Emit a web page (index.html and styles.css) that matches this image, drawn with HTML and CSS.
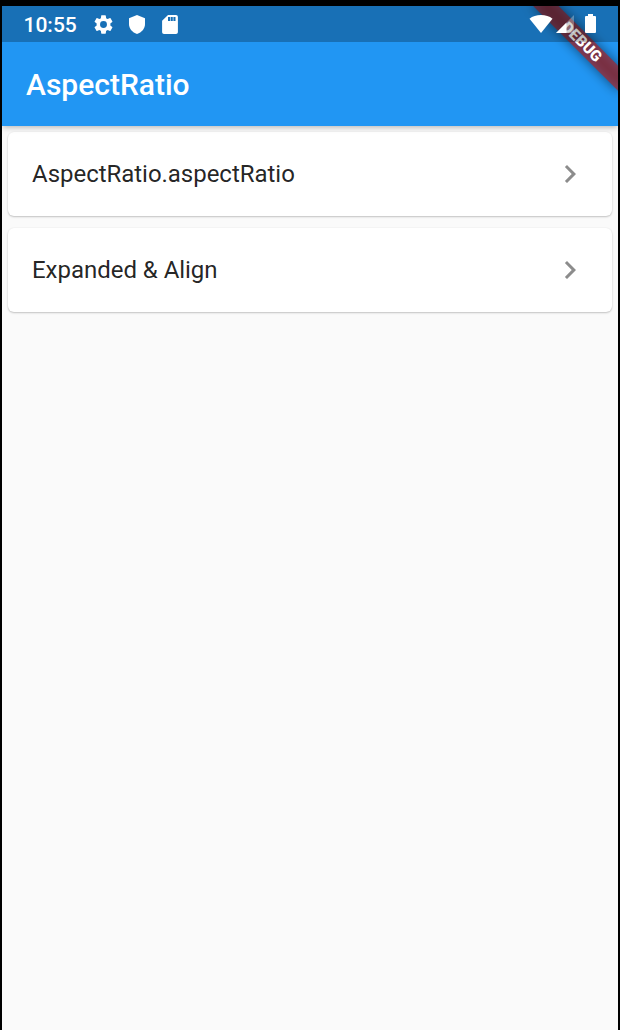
FILE: index.html
```html
<!DOCTYPE html>
<html lang="en">
<head>
<meta charset="utf-8">
<title>AspectRatio</title>
<link rel="stylesheet" href="styles.css">
</head>
<body>
<div class="screen">
  <div class="status-bar">
    <span class="clock">10:55</span>
    <div class="notifications">
      <svg class="gear" viewBox="0 0 24 24"><path d="M19.14 12.94c.04-.3.06-.61.06-.94 0-.32-.02-.64-.07-.94l2.03-1.58a.49.49 0 0 0 .12-.61l-1.92-3.32a.49.49 0 0 0-.59-.22l-2.39.96c-.5-.38-1.03-.7-1.62-.94l-.36-2.54a.48.48 0 0 0-.48-.41h-3.84c-.24 0-.43.17-.47.41l-.36 2.54c-.59.24-1.13.57-1.62.94l-2.39-.96a.48.48 0 0 0-.59.22L2.74 8.87c-.12.21-.08.47.12.61l2.03 1.58c-.05.3-.09.63-.09.94s.02.64.07.94l-2.03 1.58a.49.49 0 0 0-.12.61l1.92 3.32c.12.22.37.29.59.22l2.39-.96c.5.38 1.03.7 1.62.94l.36 2.54c.05.24.24.41.48.41h3.84c.24 0 .44-.17.47-.41l.36-2.54c.59-.24 1.13-.56 1.62-.94l2.39.96c.22.08.47 0 .59-.22l1.92-3.32a.48.48 0 0 0-.12-.61l-2.01-1.58zM12 15.6A3.6 3.6 0 1 1 12 8.400a3.6 3.6 0 0 1 0 7.200z"/></svg>
      <svg class="shield" viewBox="0 0 16 19"><path d="M8 0L0 3.200V9c0 4.500 3.300 8.500 8 10 4.700-1.500 8-5.500 8-10V3.200z"/></svg>
      <svg class="sd-card" viewBox="0 0 16 19"><path fill-rule="evenodd" d="M14 0H6L.1 5.700V17c0 1.100.8 2 1.900 2h12c1.100 0 1.900-.9 1.900-2V2c0-1.100-.8-2-1.900-2zM6 2h2.100v4H6zM8.700 2h2.100v4H8.700zM11.400 2h2.100v4h-2.100z"/></svg>
    </div>
    <div class="system-icons">
      <svg class="wifi" viewBox="0 0 24 18"><path d="M12 18L.5 3.700C3.500 1.300 7.500 0 12 0s8.500 1.300 11.500 3.700z"/></svg>
      <svg class="signal" viewBox="0 0 18 18"><path class="signal-off" d="M0 18L18 0v18z"/><path d="M0 18L10.500 7.500V18z"/></svg>
      <svg class="battery" viewBox="0 0 11 19"><path d="M3 0h5v2h2q1 0 1 1v15q0 1-1 1H1q-1 0-1-1V3q0-1 1-1h2z"/></svg>
    </div>
  </div>
  <header class="app-bar"><h1 class="title">AspectRatio</h1></header>
  <main class="list">
    <a class="card">
      <span class="label">AspectRatio.aspectRatio</span>
      <svg class="chevron" viewBox="0 0 24 24"><path d="M10 6L8.590 7.410 13.170 12l-4.580 4.590L10 18l6-6z"/></svg>
    </a>
    <a class="card">
      <span class="label">Expanded &amp; Align</span>
      <svg class="chevron" viewBox="0 0 24 24"><path d="M10 6L8.590 7.410 13.170 12l-4.580 4.590L10 18l6-6z"/></svg>
    </a>
  </main>
  <div class="debug-corner"><div class="debug-banner"><span class="debug-text">DEBUG</span></div></div>
</div>
</body>
</html>
```
FILE: styles.css
```css
* { box-sizing: border-box; }
body {
  margin: 0;
  height: 1030px;
  padding: 6px 2px 0;
  background: #000;
  font-family: Roboto, sans-serif;
  overflow: hidden;
}
.screen {
  position: relative;
  height: 1024px;
  background: #fafafa;
  overflow: hidden;
}
svg { display: block; flex: none; fill: #fff; }

/* The status bar is a translucent scrim above the app, including the banner. */
.status-bar {
  position: relative;
  z-index: 3;
  height: 36px;
  padding: 0 22.5px 0 21.5px;
  display: flex;
  align-items: center;
  justify-content: space-between;
  background: rgba(0, 0, 0, .25);
}
.clock {
  width: 68.5px;
  padding-top: 1px;
  color: #fff;
  font-size: 21px;
  font-weight: 500;
  line-height: 24px;
}
.notifications { display: flex; align-items: center; margin-right: auto; }
.gear { width: 23px; height: 23px; }
.shield { width: 16px; height: 19px; margin-left: 13.5px; }
.sd-card { width: 16px; height: 19px; margin-left: 17px; }
.system-icons { display: flex; align-items: center; padding-bottom: 1px; }
.wifi { width: 24px; height: 18px; }
.signal { width: 18px; height: 18px; margin-left: 3px; }
.signal-off { opacity: .3; }
.battery { width: 11px; height: 19px; margin-left: 11px; }

.app-bar {
  position: relative;
  z-index: 1;
  height: 120px;
  margin-top: -36px;
  padding: 36px 24px 0;
  display: flex;
  align-items: center;
  background: #2196f3;
  box-shadow: 0 2px 5px -1px rgba(0, 0, 0, .2), 0 4px 6px rgba(0, 0, 0, .05), 0 1px 8px rgba(0, 0, 0, .04);
}
.title {
  margin: 0;
  padding-top: 1px;
  color: #fff;
  font-size: 30px;
  font-weight: 500;
  line-height: 35px;
}
.list { display: flex; flex-direction: column; gap: 12px; padding: 6px; }
.card {
  height: 84px;
  padding: 0 24px;
  display: flex;
  align-items: center;
  justify-content: space-between;
  border-radius: 6px;
  background: #fff;
  box-shadow: 0 1px 2px rgba(0, 0, 0, .22), 0 0 2px rgba(0, 0, 0, .05);
}
.label { color: rgba(0, 0, 0, .87); font-size: 24px; line-height: 28px; letter-spacing: -.03px; }
.chevron { width: 36px; height: 36px; fill: #8c8c8c; }

.debug-corner {
  position: absolute;
  z-index: 2;
  top: 0;
  right: 0;
  width: 140px;
  height: 140px;
  overflow: hidden;
}
.debug-banner {
  position: absolute;
  top: 42px;
  left: 80px;
  width: 120px;
  height: 18px;
  transform-origin: 60px -42px;
  transform: rotate(45deg);
}
.debug-banner::before, .debug-banner::after {
  content: "";
  position: absolute;
  inset: 0;
}
.debug-banner::before { background: rgba(0, 0, 0, .5); filter: blur(5.7px); }
.debug-banner::after { background: rgba(183, 28, 28, .627); }
.debug-text {
  position: absolute;
  z-index: 1;
  inset: 0;
  color: #fff;
  font-size: 15.3px;
  font-weight: 900;
  line-height: 18px;
  text-align: center;
}
```
